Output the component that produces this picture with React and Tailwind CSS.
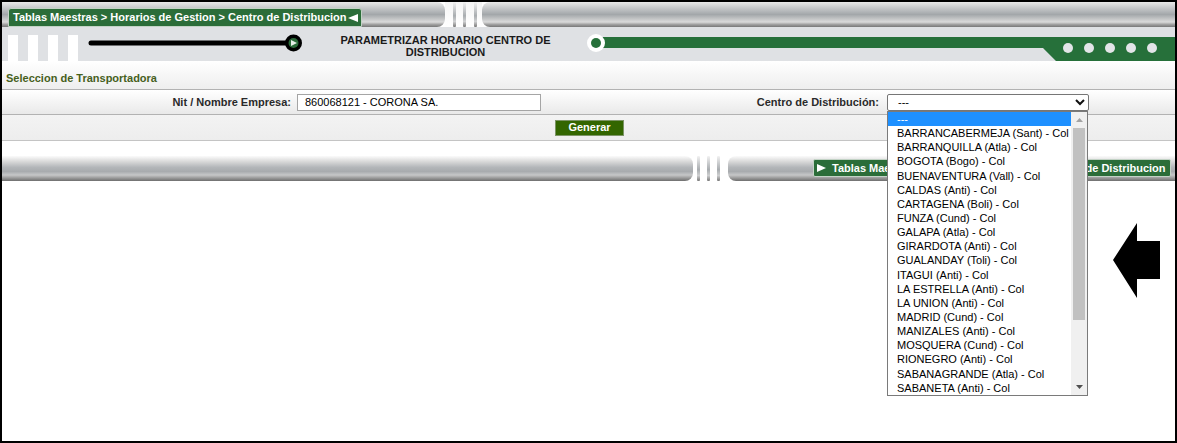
import React from "react";

const items = [
  "---",
  "BARRANCABERMEJA (Sant) - Col",
  "BARRANQUILLA (Atla) - Col",
  "BOGOTA (Bogo) - Col",
  "BUENAVENTURA (Vall) - Col",
  "CALDAS (Anti) - Col",
  "CARTAGENA (Boli) - Col",
  "FUNZA (Cund) - Col",
  "GALAPA (Atla) - Col",
  "GIRARDOTA (Anti) - Col",
  "GUALANDAY (Toli) - Col",
  "ITAGUI (Anti) - Col",
  "LA ESTRELLA (Anti) - Col",
  "LA UNION (Anti) - Col",
  "MADRID (Cund) - Col",
  "MANIZALES (Anti) - Col",
  "MOSQUERA (Cund) - Col",
  "RIONEGRO (Anti) - Col",
  "SABANAGRANDE (Atla) - Col",
  "SABANETA (Anti) - Col",
];

function NotchBar({ className }) {
  return (
    <div
      className={`h-full w-[3px] rounded-[1px] bg-[linear-gradient(to_bottom,#f2f2f2_0%,#c9cbcd_30%,#a9adb0_55%,#cfd0d1_78%,#9a9a9a_92%,#7a7a7a_100%)] ${className || ""}`}
    />
  );
}

export default function App() {
  return (
    <div className="relative box-border h-[443px] w-[1177px] overflow-hidden border-2 border-black bg-white font-['Liberation_Sans',Arial,sans-serif]">
      {/* top metallic bar */}
      <div className="flex h-[25px]">
        <div className="w-[443px] rounded-r-[8px] bg-[linear-gradient(to_bottom,#e9e9e9_0%,#c6c8ca_24%,#a3a7aa_50%,#c8c9ca_70%,#dadada_80%,#a0a0a0_90%,#777777_100%)]">
          <div className="ml-[6px] mt-[6px] box-border flex h-[19px] w-[354px] items-center rounded-t-[3px] border border-[#c3d3c6] bg-[#2b6d39] pl-[4px] text-[11px] font-bold leading-none text-white">
            <span>Tablas Maestras &gt; Horarios de Gestion &gt; Centro de Distribucion</span>
            <svg width="10" height="8" viewBox="0 0 10 8" className="ml-[1px]">
              <polygon points="0,4 10,0 10,8" fill="#ffffff" />
            </svg>
          </div>
        </div>
        <div className="flex h-full w-[37px] bg-[linear-gradient(to_bottom,#f4f4f4,#ffffff)] pl-[8px]">
          <NotchBar />
          <NotchBar className="ml-[7px]" />
          <NotchBar className="ml-[8px]" />
        </div>
        <div className="flex-1 rounded-l-[8px] bg-[linear-gradient(to_bottom,#e9e9e9_0%,#c6c8ca_24%,#a3a7aa_50%,#c8c9ca_70%,#dadada_80%,#a0a0a0_90%,#777777_100%)]" />
      </div>

      {/* gray band */}
      <div className="flex h-[34px] bg-[#dfe1e4]">
        <div className="flex gap-[10px] pl-[6px] pt-[8px]">
          <div className="h-[26px] w-[10px] bg-white" />
          <div className="h-[26px] w-[10px] bg-white" />
          <div className="h-[26px] w-[10px] bg-white" />
          <div className="h-[26px] w-[10px] bg-white" />
        </div>
        <svg width="228" height="34" viewBox="0 0 228 34" className="shrink-0">
          <line x1="13" y1="16" x2="212" y2="16" stroke="#000" strokeWidth="5" strokeLinecap="round" />
          <circle cx="215.5" cy="16" r="8.5" fill="#000" />
          <circle cx="215.5" cy="16" r="5" fill="#2b6b3a" />
          <polygon points="213,13 219,16 213,19" fill="#e8efe9" />
        </svg>
        <div className="w-[279px] shrink-0 pt-[7px] text-center text-[11px] font-bold leading-[12px] text-[#1b1b1b]">
          PARAMETRIZAR HORARIO CENTRO DE
          <br />
          DISTRIBUCION
        </div>
        <svg width="590" height="34" viewBox="0 0 590 34" className="shrink-0">
          <polygon points="14,10 590,10 590,34 471,34 458,21 14,21" fill="#26703a" />
          <circle cx="11" cy="16" r="9" fill="#ffffff" />
          <circle cx="11" cy="16" r="5" fill="#26703a" />
          <circle cx="483" cy="21" r="5" fill="#e3e5e8" />
          <circle cx="504" cy="21" r="5" fill="#e3e5e8" />
          <circle cx="525" cy="21" r="5" fill="#e3e5e8" />
          <circle cx="546" cy="21" r="5" fill="#e3e5e8" />
          <circle cx="567" cy="21" r="5" fill="#e3e5e8" />
        </svg>
      </div>

      {/* section title */}
      <div className="flex h-[28px] items-center bg-[linear-gradient(to_bottom,#ffffff,#eeeeee)] pl-[4px] pt-[6px] text-[11px] font-bold text-[#46601c]">
        Seleccion de Transportadora
      </div>

      {/* form row */}
      <div className="flex h-[25px] items-center border-t border-[#b2b2b2] bg-[linear-gradient(to_bottom,#ffffff,#e9e9e9)] text-[11px]">
        <div className="w-[289px] shrink-0 text-right font-bold text-[#2a2a2a]">Nit / Nombre Empresa:</div>
        <div className="ml-[6px] box-border flex h-[17px] w-[244px] shrink-0 items-center border border-[#a5a5a5] bg-white pl-[7px] text-black">
          860068121 - CORONA SA.
        </div>
        <div className="w-[338px] shrink-0 text-right font-bold text-[#2a2a2a]">Centro de Distribución:</div>
        <div className="ml-[8px] box-border flex h-[17px] w-[202px] shrink-0 items-center justify-between rounded-[2px] border border-[#767676] bg-white pl-[10px] pr-[3px] text-black">
          <span>---</span>
          <svg width="10" height="7" viewBox="0 0 10 7">
            <polyline points="1,1 5,5 9,1" fill="none" stroke="#111" strokeWidth="2" />
          </svg>
        </div>
      </div>

      {/* button row */}
      <div className="flex h-[26px] items-center border-t border-[#b2b2b2] bg-[linear-gradient(to_bottom,#f3f3f3,#ededed)]">
        <button className="ml-[553px] box-border flex h-[16px] w-[69px] items-center justify-center border border-[#7c9466] bg-[#336600] text-[11px] font-bold text-white">
          Generar
        </button>
      </div>

      <div className="h-[16px] border-t border-[#c4c4c4]" />

      {/* bottom metallic bar */}
      <div className="flex h-[25px]">
        <div className="w-[691px] rounded-r-[8px] bg-[linear-gradient(to_bottom,#fbfbfb_0%,#dcdcdc_20%,#b3b6b9_45%,#a8abae_62%,#c6c7c8_76%,#9a9a9a_88%,#6e6e6e_100%)]" />
        <div className="flex h-full w-[35px] bg-white pl-[4px]">
          <NotchBar />
          <NotchBar className="ml-[7px]" />
          <NotchBar className="ml-[7px]" />
        </div>
        <div className="flex-1 rounded-l-[8px] bg-[linear-gradient(to_bottom,#fbfbfb_0%,#dcdcdc_20%,#b3b6b9_45%,#a8abae_62%,#c6c7c8_76%,#9a9a9a_88%,#6e6e6e_100%)] pl-[85px] pt-[3px]">
          <div className="box-border flex h-[18px] w-[358px] items-center rounded-[2px] border border-[#c3d3c6] bg-[#2b6d39] pl-[3px] text-[11px] font-bold leading-none text-white">
            <svg width="9" height="8" viewBox="0 0 9 8">
              <polygon points="0,0 9,4 0,8" fill="#ffffff" />
            </svg>
            <span className="ml-[6px]">Tablas Maestras &gt; Horarios de Gestion &gt; Centro de Distribucion</span>
          </div>
        </div>
      </div>

      {/* open dropdown list */}
      <div className="absolute left-[885px] top-[109px] z-10 box-border flex h-[285px] w-[201px] border border-[#7a7a7a] bg-white">
        <div className="flex-1 overflow-hidden">
          {items.map((it, i) => (
            <div
              key={it}
              className={`h-[14.15px] whitespace-nowrap pl-[9px] text-[11px] leading-[14.15px] ${
                i === 0 ? "bg-[#1e90ff] text-white" : "text-black"
              }`}
            >
              {it}
            </div>
          ))}
        </div>
        <div className="flex w-[16px] flex-col items-center bg-[#f0f0f0]">
          <div className="flex h-[16px] items-center justify-center">
            <svg width="7" height="4" viewBox="0 0 7 4">
              <polygon points="0,4 3.5,0 7,4" fill="#a3a3a3" />
            </svg>
          </div>
          <div className="h-[192px] w-[12px] bg-[#c1c1c1]" />
          <div className="flex-1" />
          <div className="flex h-[16px] items-center justify-center">
            <svg width="7" height="4" viewBox="0 0 7 4">
              <polygon points="0,0 7,0 3.5,4" fill="#505050" />
            </svg>
          </div>
        </div>
      </div>

      {/* black arrow */}
      <svg
        width="48"
        height="76"
        viewBox="0 0 48 76"
        className="absolute left-[1111px] top-[221px]"
      >
        <polygon points="0,37 24,0 24,18 47,18 47,56 24,56 24,75" fill="#000" />
      </svg>
    </div>
  );
}
